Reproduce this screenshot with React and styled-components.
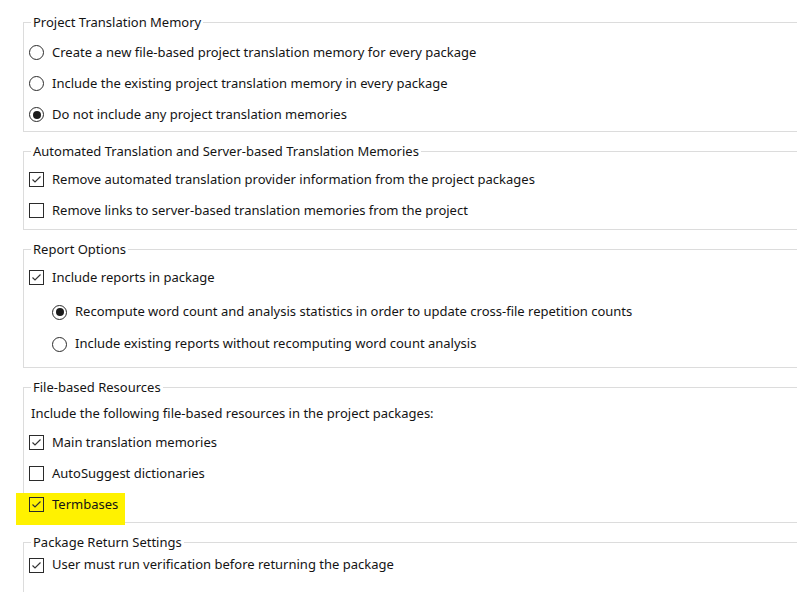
import styled, { createGlobalStyle } from "styled-components";

const GlobalStyle = createGlobalStyle`
	html, body {
		margin: 0;
		padding: 0;
		background: #ffffff;
	}
	body {
		font-family: "Noto Sans", "Open Sans", sans-serif;
		font-size: 13px;
		color: #141414;
		overflow: hidden;
	}
`;

const Page = styled.div`
	width: 797px;
	height: 592px;
	overflow: hidden;
	padding: 14px 0 0 23px;
	box-sizing: border-box;
`;

const Group = styled.fieldset`
	margin: ${(p) => (p.$first ? 0 : 11)}px 0 0 0;
	padding: ${(p) => p.$pt}px 0 ${(p) => p.$pb}px 0;
	border: 1px solid #dcdcdc;
	border-right: none;
	min-width: 0;
`;

const Legend = styled.legend`
	margin-left: 7px;
	padding: 0 2px;
	line-height: 17px;
	font-size: 13px;
	color: #141414;
`;

const Row = styled.label`
	position: relative;
	display: flex;
	align-items: center;
	gap: 8px;
	height: ${(p) => p.$h || 31}px;
	margin-top: ${(p) => p.$mt || 0}px;
	padding-left: ${(p) => 5 + (p.$indent || 0)}px;
	white-space: nowrap;
`;

const Text = styled.span`
	position: relative;
	z-index: 1;
	margin-bottom: 2px;
`;

const Description = styled.div`
	height: 26px;
	line-height: 24px;
	padding-left: 7px;
	white-space: nowrap;
`;

const Box = styled.span`
	position: relative;
	z-index: 1;
	width: 15px;
	height: 15px;
	box-sizing: border-box;
	border: 1px solid #2b2b2b;
	background: transparent;
	flex-shrink: 0;
	display: flex;
	align-items: center;
	justify-content: center;
`;

const Radio = styled.span`
	position: relative;
	z-index: 1;
	width: 15px;
	height: 15px;
	box-sizing: border-box;
	border: 1px solid #2b2b2b;
	border-radius: 50%;
	flex-shrink: 0;
	display: flex;
	align-items: center;
	justify-content: center;
	&::after {
		content: "";
		display: ${(p) => (p.$on ? "block" : "none")};
		width: 8px;
		height: 8px;
		border-radius: 50%;
		background: #1a1a1a;
	}
`;

const Highlight = styled.span`
	position: absolute;
	left: -8px;
	top: 4px;
	width: 109px;
	height: 32px;
	background: #fff200;
	z-index: 0;
`;

const CheckBox = ({ checked }) => (
	<Box>
		{checked && (
			<svg width="13" height="13" viewBox="0 0 13 13">
				<polyline
					points="2.5,6.5 5,9 10.5,3.5"
					fill="none"
					stroke="#333333"
					strokeWidth="1.2"
				/>
			</svg>
		)}
	</Box>
);

const App = () => {
	return (
		<>
			<GlobalStyle />
			<Page>
				<Group $first $pt={6} $pb={1}>
					<Legend>Project Translation Memory</Legend>
					<Row>
						<Radio />
						<Text>Create a new file-based project translation memory for every package</Text>
					</Row>
					<Row>
						<Radio />
						<Text>Include the existing project translation memory in every package</Text>
					</Row>
					<Row>
						<Radio $on />
						<Text>Do not include any project translation memories</Text>
					</Row>
				</Group>

				<Group $pt={4} $pb={3}>
					<Legend>Automated Translation and Server-based Translation Memories</Legend>
					<Row>
						<CheckBox checked />
						<Text>Remove automated translation provider information from the project packages</Text>
					</Row>
					<Row>
						<CheckBox />
						<Text>Remove links to server-based translation memories from the project</Text>
					</Row>
				</Group>

				<Group $pt={4} $pb={7}>
					<Legend>Report Options</Legend>
					<Row>
						<CheckBox checked />
						<Text>Include reports in package</Text>
					</Row>
					<Row $indent={23} $h={32} $mt={3}>
						<Radio $on />
						<Text>Recompute word count and analysis statistics in order to update cross-file repetition counts</Text>
					</Row>
					<Row $indent={23} $h={32}>
						<Radio />
						<Text>Include existing reports without recomputing word count analysis</Text>
					</Row>
				</Group>

				<Group $pt={5} $pb={2}>
					<Legend>File-based Resources</Legend>
					<Description>Include the following file-based resources in the project packages:</Description>
					<Row>
						<CheckBox checked />
						<Text>Main translation memories</Text>
					</Row>
					<Row>
						<CheckBox />
						<Text>AutoSuggest dictionaries</Text>
					</Row>
					<Row>
						<Highlight />
						<CheckBox checked />
						<Text>Termbases</Text>
					</Row>
				</Group>

				<Group $pt={0} $pb={40}>
					<Legend>Package Return Settings</Legend>
					<Row $h={28}>
						<CheckBox checked />
						<Text>User must run verification before returning the package</Text>
					</Row>
				</Group>
			</Page>
		</>
	);
};

export default App;
